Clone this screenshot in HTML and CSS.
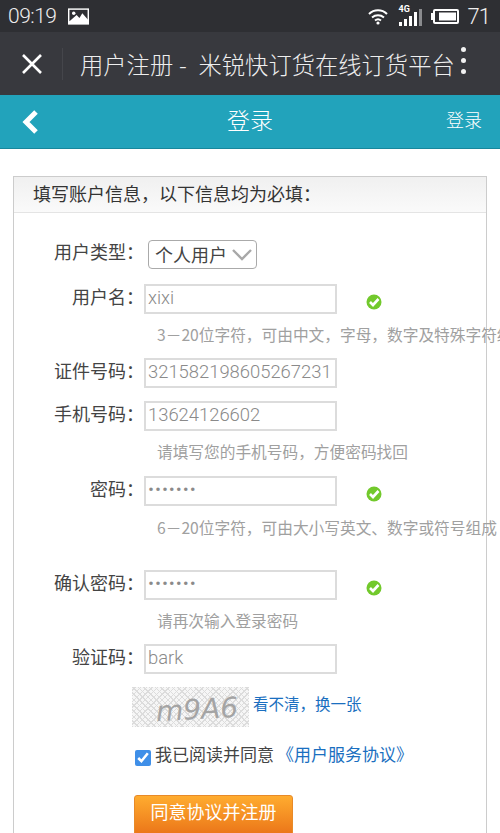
FILE: index.html
```html
<!DOCTYPE html>
<html lang="zh-CN">
<head>
  <meta charset="UTF-8">
  <meta name="viewport" content="width=device-width, initial-scale=1.0">
  <title>用户注册</title>
  <link rel="stylesheet" href="styles.css">
</head>
<body>
  <div class="status-bar">
    <span class="clock">09:19</span>
    <svg class="pic-icon" width="21" height="17" viewBox="0 0 22 17">
      <rect width="22" height="17" fill="#fff"/>
      <rect x="1.500" y="1.500" width="19" height="12" fill="#2e2f33"/>
      <circle cx="6" cy="5" r="1.800" fill="#fff"/>
      <path d="M1 14 L9 7 L12 10 L15 5 L21 12 V15 H1 Z" fill="#fff"/>
    </svg>
    <div class="status-right">
      <svg width="20" height="17" viewBox="0 0 20 17" fill="none" stroke="#fff" stroke-width="2">
        <path d="M1 6 C6 1 14 1 19 6"/>
        <path d="M4 9.500 C7.500 6.500 12.500 6.500 16 9.500"/>
        <path d="M7 12.500 C8.800 11 11.200 11 13 12.500"/>
        <circle cx="10" cy="15" r="1.600" fill="#fff" stroke="none"/>
      </svg>
      <span class="signal">
        <span class="tag-4g">4G</span>
        <svg width="23" height="18" viewBox="0 0 23 18" fill="#fff">
          <rect x="0" y="14" width="3" height="4"/>
          <rect x="5" y="11" width="3" height="7"/>
          <rect x="10" y="8" width="3" height="10"/>
          <rect x="15" y="4" width="3" height="14"/>
          <rect x="20" y="1" width="3" height="17" fill="#8a8b8e"/>
        </svg>
      </span>
      <svg class="battery" width="28" height="15" viewBox="0 0 28 15" fill="none">
        <rect x="3" y="1" width="24" height="13" rx="1" stroke="#fff" stroke-width="2"/>
        <rect x="0" y="4" width="2" height="7" fill="#fff"/>
        <rect x="8" y="3.500" width="17" height="8" fill="#fff"/>
      </svg>
      <span class="battery-num">71</span>
    </div>
  </div>

  <div class="title-bar">
    <svg class="close-icon" width="22" height="22" viewBox="0 0 22 22" stroke="#fff" stroke-width="2.600">
      <path d="M2 2 L20 20 M20 2 L2 20"/>
    </svg>
    <span class="divider"></span>
    <span class="page-title">用户注册 -&nbsp; 米锐快订货在线订货平台</span>
    <span class="dots"><i></i><i></i><i></i></span>
  </div>

  <div class="nav-bar">
    <svg class="back-icon" width="18" height="24" viewBox="0 0 18 24" fill="none" stroke="#fff" stroke-width="5">
      <path d="M15 2 L5 12 L15 22"/>
    </svg>
    <span class="nav-title">登录</span>
    <span class="nav-link">登录</span>
  </div>

  <div class="panel">
    <div class="panel-head">填写账户信息，以下信息均为必填：</div>
    <form class="reg-form">
      <div class="field field-first">
        <label>用户类型：</label>
        <div class="type-select">
          <span>个人用户</span>
          <svg width="20" height="12" viewBox="0 0 20 12" fill="none" stroke="#a8a8a8" stroke-width="2.400">
            <path d="M1 1 L10 10 L19 1"/>
          </svg>
        </div>
      </div>

      <div class="field">
        <label>用户名：</label>
        <input type="text" value="xixi">
        <svg class="ok-icon" width="16" height="16" viewBox="0 0 16 16"><circle cx="8" cy="8" r="7.500" fill="#72c92c"/><path d="M4 8 L7 11 L12.500 5" fill="none" stroke="#fff" stroke-width="2.600"/></svg>
      </div>
      <p class="hint">3－20位字符，可由中文，字母，数字及特殊字符组成</p>

      <div class="field field-after-hint">
        <label>证件号码：</label>
        <input type="text" value="321582198605267231">
      </div>

      <div class="field">
        <label>手机号码：</label>
        <input type="text" value="13624126602">
      </div>
      <p class="hint">请填写您的手机号码，方便密码找回</p>

      <div class="field field-pwd">
        <label>密码：</label>
        <input class="pwd-input" type="password" value="1234567">
        <svg class="ok-icon" width="16" height="16" viewBox="0 0 16 16"><circle cx="8" cy="8" r="7.500" fill="#72c92c"/><path d="M4 8 L7 11 L12.500 5" fill="none" stroke="#fff" stroke-width="2.600"/></svg>
      </div>
      <p class="hint hint-low">6－20位字符，可由大小写英文、数字或符号组成</p>

      <div class="field field-gap">
        <label>确认密码：</label>
        <input class="pwd-input" type="password" value="1234567">
        <svg class="ok-icon" width="16" height="16" viewBox="0 0 16 16"><circle cx="8" cy="8" r="7.500" fill="#72c92c"/><path d="M4 8 L7 11 L12.500 5" fill="none" stroke="#fff" stroke-width="2.600"/></svg>
      </div>
      <p class="hint">请再次输入登录密码</p>

      <div class="field field-after-hint">
        <label>验证码：</label>
        <input type="text" value="bark">
      </div>

      <div class="captcha-row">
        <div class="captcha"><span>m9A6</span></div>
        <a class="link" href="#">看不清，换一张</a>
      </div>

      <div class="agree-row">
        <input class="agree-box" type="checkbox" checked>
        <span>我已阅读并同意</span>
        <a class="link agree-link" href="#">《用户服务协议》</a>
      </div>

      <button class="submit-btn" type="button">同意协议并注册</button>
    </form>
  </div>
</body>
</html>
```

FILE: styles.css
```css
html, body {
  margin: 0;
  padding: 0;
  height: 833px;
  overflow: hidden;
}

body {
  width: 500px;
  background-color: #fff;
  font-family: "Noto Sans CJK SC", Roboto, sans-serif;
  color: #444;
}

/* phone status bar */
.status-bar {
  height: 32px;
  background-color: #2e2f33;
  color: #eee;
  display: flex;
  align-items: center;
  padding: 0 10px 0 8px;
  box-sizing: border-box;
}

.clock {
  font-family: Roboto, sans-serif;
  font-weight: 300;
  font-size: 21px;
  letter-spacing: -0.5px;
}

.pic-icon {
  margin-left: 11px;
}

.status-right {
  margin-left: auto;
  display: flex;
  align-items: center;
}

.signal {
  position: relative;
  display: flex;
  margin-left: 11px;
  margin-top: 2px;
}

.tag-4g {
  position: absolute;
  left: 0;
  top: -4px;
  font-family: Roboto, sans-serif;
  font-size: 9px;
  font-weight: 700;
  color: #fff;
}

.battery {
  margin-left: 9px;
}

.battery-num {
  font-family: Roboto, sans-serif;
  font-weight: 300;
  font-size: 22px;
  letter-spacing: -1px;
  margin-left: 9px;
}

/* browser title bar */
.title-bar {
  height: 63px;
  background-color: #38393e;
  display: flex;
  align-items: center;
  box-sizing: border-box;
  padding-left: 21px;
}

.divider {
  width: 1px;
  height: 32px;
  margin-left: 19px;
  background-color: #45464b;
}

.page-title {
  margin-left: 17px;
  font-size: 23.300px;
  font-weight: 300;
  word-spacing: 0.700px;
  color: #eee;
  white-space: nowrap;
  width: 381px;
}

.dots {
  display: flex;
  flex-direction: column;
  gap: 6px;
  margin-top: -6px;
}

.dots i {
  display: block;
  width: 5px;
  height: 5px;
  border-radius: 50%;
  background-color: #f2f2f2;
}

/* teal nav */
.nav-bar {
  position: relative;
  height: 54px;
  background-color: #22a3bb;
  border-bottom: 1px solid #17879c;
  box-sizing: border-box;
  display: flex;
  align-items: center;
  justify-content: space-between;
  padding: 0 18px 5px 21px;
  color: #fff;
}

.back-icon {
  margin-top: 5px;
}

.nav-title {
  position: absolute;
  left: 0;
  right: 0;
  text-align: center;
  font-size: 23px;
  font-weight: 300;
}

.nav-link {
  font-size: 18px;
  font-weight: 300;
}

/* form panel */
.panel {
  margin: 27px 13px 0;
  border: 1px solid #ccc;
  border-bottom: none;
  height: 656px;
}

.panel-head {
  height: 35px;
  line-height: 33px;
  padding-left: 19px;
  font-size: 18px;
  color: #333;
  background: linear-gradient(#f0f0f0, #fafafa);
  border-bottom: 1px solid #e4e4e4;
}

.field {
  display: flex;
  align-items: flex-start;
  margin-top: 13px;
}

.field-first {
  margin-top: 27px;
  margin-bottom: 15px;
}

.field-first label {
  margin-top: -1px;
}

.field-first + .field {
  margin-top: 0;
}

.field-after-hint {
  margin-top: 11px;
}

.field-pwd {
  margin-top: 12px;
}

.field-gap {
  margin-top: 30px;
}

.field label {
  width: 130px;
  flex: none;
  text-align: right;
  font-size: 18px;
  line-height: 24px;
  color: #444;
}

.field input {
  width: 193px;
  height: 30px;
  box-sizing: border-box;
  margin: 0;
  padding: 0 2px 3px;
  border: 2px solid #dcdcdc;
  font-family: Roboto, sans-serif;
  font-weight: 300;
  font-size: 18.400px;
  color: #8a8a8a;
  outline: none;
}

.field .pwd-input {
  letter-spacing: 1px;
}

.ok-icon {
  margin: 10px 0 0 29px;
}

.type-select {
  display: flex;
  align-items: center;
  justify-content: space-between;
  width: 109px;
  height: 29px;
  box-sizing: border-box;
  margin-left: 4px;
  padding: 0 4px 2px 6px;
  border: 1px solid #aaa;
  border-radius: 4px;
  font-size: 18px;
  line-height: 24px;
  color: #444;
}

.type-select svg {
  margin-top: 2px;
}

.hint {
  margin: 9px 0 0 143px;
  font-size: 15.700px;
  line-height: 24px;
  color: #a0a0a0;
  white-space: nowrap;
}

.hint-low {
  margin-top: 10px;
}

.captcha-row {
  display: flex;
  align-items: center;
  margin: 13px 0 0 118px;
}

.captcha {
  width: 117px;
  height: 40px;
  display: flex;
  align-items: center;
  justify-content: center;
  overflow: hidden;
  background-color: #f6f6f6;
  background-image:
    repeating-linear-gradient(45deg, #dcdcdc 0 1px, transparent 1px 4px),
    repeating-linear-gradient(-45deg, #dcdcdc 0 1px, transparent 1px 4px);
}

.captcha span {
  font-family: "DejaVu Sans", sans-serif;
  font-size: 28px;
  font-style: italic;
  color: #a4a4a4;
  margin: 4px 0 0 14px;
  transform: rotate(-3deg);
}

.link {
  color: #1a6fc0;
  text-decoration: none;
  font-size: 15.500px;
}

.captcha-row .link {
  margin-left: 4px;
  margin-bottom: 8px;
}

.agree-row {
  display: flex;
  align-items: center;
  height: 24px;
  margin: 14px 0 0 121px;
  font-size: 17px;
  color: #444;
}

.agree-box {
  width: 16px;
  height: 16px;
  margin: 10px 4px 0 0;
  accent-color: #3f8fe8;
}

.agree-link {
  margin-left: 3px;
  font-size: 17px;
}

.submit-btn {
  display: block;
  width: 159px;
  height: 42px;
  margin: 30px 0 0 120px;
  padding: 0 0 10px;
  border: 1px solid #e88a28;
  border-radius: 3px;
  background: linear-gradient(#ffac2f, #ea7318);
  color: #fff;
  font-family: "Noto Sans CJK SC", sans-serif;
  font-size: 18px;
}
```
